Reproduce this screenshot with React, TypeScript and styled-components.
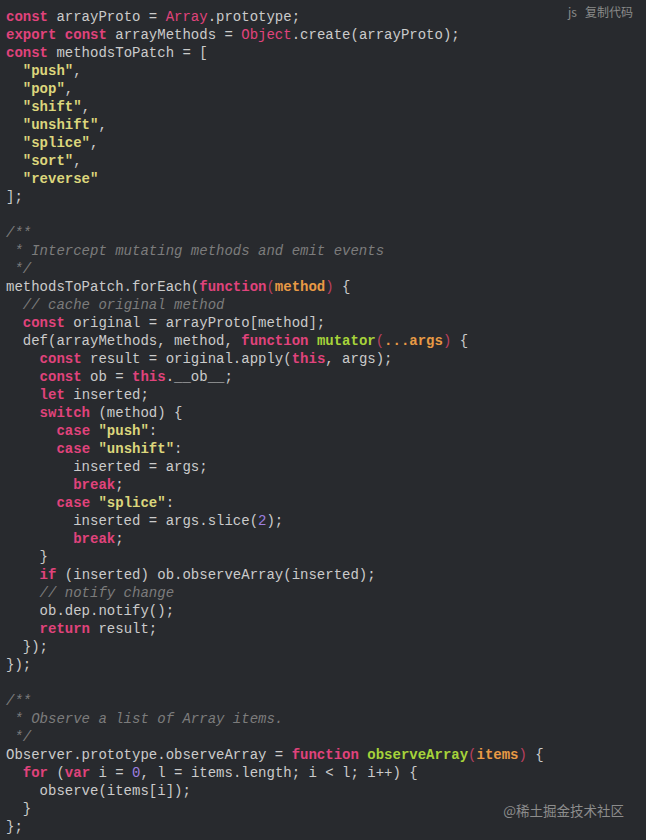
import React from "react";
import styled, { createGlobalStyle } from "styled-components";

const Global = createGlobalStyle`
  html, body { margin: 0; padding: 0; background: #282a2e; }
  #root { min-height: 100vh; }
`;

type Kind = "p" | "k" | "b" | "s" | "c" | "t" | "a" | "pp" | "n";
type Tok = [Kind, string];

const colors: Record<Kind, string> = {
  p: "#cbcbcb",
  k: "#e0437c",
  b: "#e0437c",
  s: "#dcd67c",
  c: "#7c7c7c",
  t: "#a6d33a",
  a: "#e99a45",
  pp: "#b8405f",
  n: "#9d7fe0",
};

const Frame = styled.div`
  position: relative;
  width: 646px;
  height: 840px;
  background: #282a2e;
  overflow: hidden;
`;

const Pre = styled.pre`
  margin: 0;
  padding: 8px 6px;
  font-family: "Liberation Mono", "Courier New", monospace;
  font-size: 14px;
  line-height: 18px;
  color: #cbcbcb;
  white-space: pre;
`;

const Line = styled.div`
  height: 18px;
`;

const Span = styled.span<{ $kind: Kind }>`
  color: ${(p) => colors[p.$kind]};
  font-weight: ${(p) => (p.$kind === "k" || p.$kind === "t" || p.$kind === "a" || p.$kind === "s" ? 700 : 400)};
  font-style: ${(p) => (p.$kind === "c" ? "italic" : "normal")};
`;

const Lang = styled.div`
  position: absolute;
  top: 4px;
  right: 13px;
  font-family: "Noto Sans CJK SC", "Noto Sans", sans-serif;
  font-size: 12px;
  line-height: 16px;
  color: #8a8a8a;
  display: flex;
  gap: 8px;
`;

const Mark = styled.div`
  position: absolute;
  right: 22px;
  bottom: 20px;
  font-family: "Noto Sans CJK SC", "Noto Sans", sans-serif;
  font-size: 13.5px;
  line-height: 20px;
  color: #8c8c8c;
`;

const P = (t: string): Tok => ["p", t];
const K = (t: string): Tok => ["k", t];
const B = (t: string): Tok => ["b", t];
const S = (t: string): Tok => ["s", t];
const C = (t: string): Tok => ["c", t];
const T = (t: string): Tok => ["t", t];
const A = (t: string): Tok => ["a", t];
const PP = (t: string): Tok => ["pp", t];
const N = (t: string): Tok => ["n", t];

const lines: Tok[][] = [
  [K("const"), P(" arrayProto = "), B("Array"), P(".prototype;")],
  [K("export"), P(" "), K("const"), P(" arrayMethods = "), B("Object"), P(".create(arrayProto);")],
  [K("const"), P(" methodsToPatch = [")],
  [P("  "), S('"push"'), P(",")],
  [P("  "), S('"pop"'), P(",")],
  [P("  "), S('"shift"'), P(",")],
  [P("  "), S('"unshift"'), P(",")],
  [P("  "), S('"splice"'), P(",")],
  [P("  "), S('"sort"'), P(",")],
  [P("  "), S('"reverse"')],
  [P("];")],
  [],
  [C("/**")],
  [C(" * Intercept mutating methods and emit events")],
  [C(" */")],
  [P("methodsToPatch.forEach("), K("function"), PP("("), A("method"), PP(")"), P(" {")],
  [P("  "), C("// cache original method")],
  [P("  "), K("const"), P(" original = arrayProto[method];")],
  [P("  def(arrayMethods, method, "), K("function"), P(" "), T("mutator"), PP("("), A("...args"), PP(")"), P(" {")],
  [P("    "), K("const"), P(" result = original.apply("), K("this"), P(", args);")],
  [P("    "), K("const"), P(" ob = "), K("this"), P(".__ob__;")],
  [P("    "), K("let"), P(" inserted;")],
  [P("    "), K("switch"), P(" (method) {")],
  [P("      "), K("case"), P(" "), S('"push"'), P(":")],
  [P("      "), K("case"), P(" "), S('"unshift"'), P(":")],
  [P("        inserted = args;")],
  [P("        "), K("break"), P(";")],
  [P("      "), K("case"), P(" "), S('"splice"'), P(":")],
  [P("        inserted = args.slice("), N("2"), P(");")],
  [P("        "), K("break"), P(";")],
  [P("    }")],
  [P("    "), K("if"), P(" (inserted) ob.observeArray(inserted);")],
  [P("    "), C("// notify change")],
  [P("    ob.dep.notify();")],
  [P("    "), K("return"), P(" result;")],
  [P("  });")],
  [P("});")],
  [],
  [C("/**")],
  [C(" * Observe a list of Array items.")],
  [C(" */")],
  [P("Observer.prototype.observeArray = "), K("function"), P(" "), T("observeArray"), PP("("), A("items"), PP(")"), P(" {")],
  [P("  "), K("for"), P(" ("), K("var"), P(" i = "), N("0"), P(", l = items.length; i < l; i++) {")],
  [P("    observe(items[i]);")],
  [P("  }")],
  [P("};")],
];

export default function App() {
  return (
    <>
      <Global />
      <Frame>
        <Pre>
          {lines.map((toks, i) => (
            <Line key={i}>
              {toks.map(([k, t], j) => (
                <Span key={j} $kind={k}>
                  {t}
                </Span>
              ))}
            </Line>
          ))}
        </Pre>
        <Lang>
          <span>js</span>
          <span>复制代码</span>
        </Lang>
        <Mark>@稀土掘金技术社区</Mark>
      </Frame>
    </>
  );
}
